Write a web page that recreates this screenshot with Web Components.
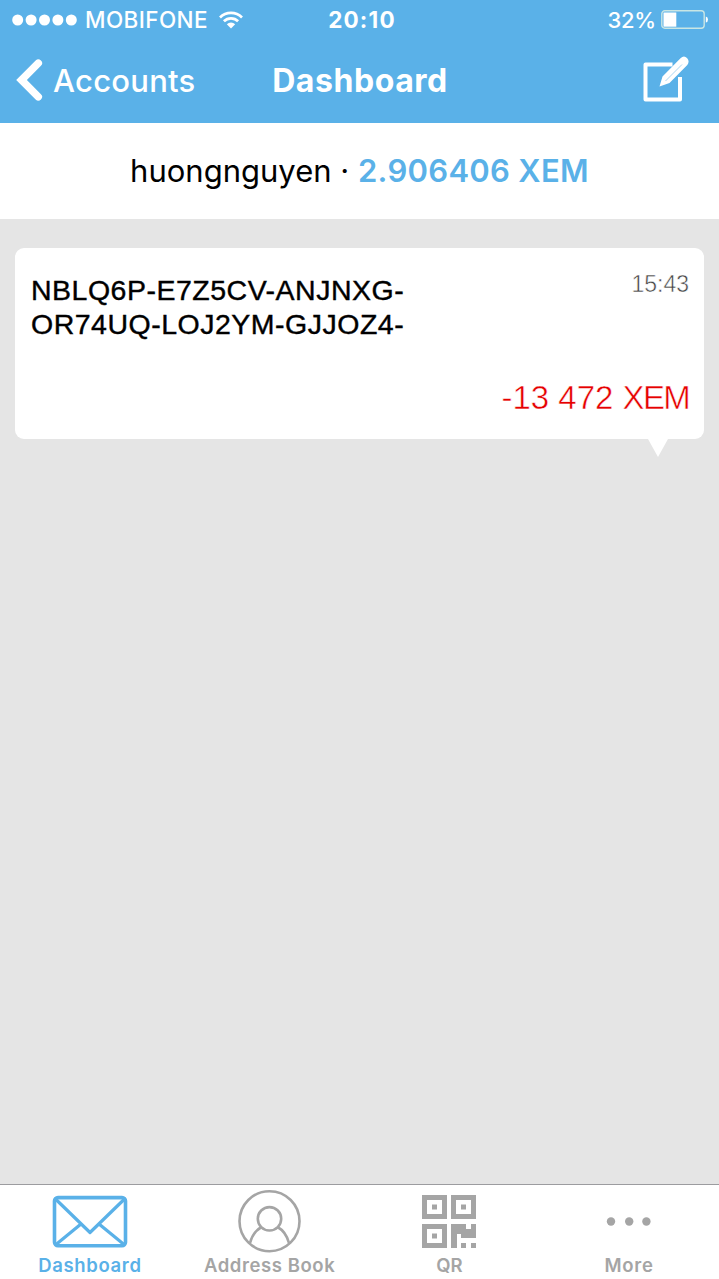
<!DOCTYPE html>
<html lang="en">
<head>
<meta charset="utf-8">
<meta name="viewport" content="width=device-width, initial-scale=1">
<title>Dashboard</title>
<style>
    html, body {
        margin: 0;
        height: 100%;
    }
    body {
        display: flex;
        flex-direction: column;
        overflow: hidden;
        background: #e5e5e5;
        font-family: Inter, "Liberation Sans", sans-serif;
        --accent: #5ab1e8;
        --muted: #a5a5a5;
    }
    main {
        flex: 1;
        padding: 29px 15px 0;
    }
</style>
</head>
<body>
<status-bar carrier="MOBIFONE" time="20:10" battery="32"></status-bar>
<nav-bar back="Accounts">Dashboard</nav-bar>
<account-balance name="huongnguyen">2.906406 XEM</account-balance>
<main>
    <transaction-card time="15:43" amount="-13 472" unit="XEM">NBLQ6P-E7Z5CV-ANJNXG-<br>OR74UQ-LOJ2YM-GJJOZ4-</transaction-card>
</main>
<tab-bar>
    <tab-item active style="--tracking: .65px">
        <svg slot="icon" width="76" height="64" fill="none" stroke="currentColor" stroke-width="3.6" stroke-linejoin="round">
            <rect x="2.5" y="8.6" width="71" height="48.2" rx="3.5"/>
            <path d="M4 10.5 38 43.5 72 10.5M4 55.5 29 35M72 55.5 47 35" stroke-width="3.2"/>
        </svg>
        Dashboard
    </tab-item>
    <tab-item style="--tracking: .58px">
        <svg slot="icon" width="64" height="64" fill="none" stroke="currentColor" stroke-width="2.6">
            <circle cx="31.5" cy="32.2" r="30"/>
            <circle cx="31.5" cy="29.8" r="11.7"/>
            <path d="M23.5 38C18 41 14 46.5 12 54M39.5 38C45 41 49 46.5 51 54"/>
        </svg>
        Address Book
    </tab-item>
    <tab-item style="--tracking: 0px">
        <svg slot="icon" width="54" height="64" fill="currentColor">
            <path fill-rule="evenodd" d="M0 6h25v24H0zM5 11v14h15V11zM29 6h25v24H29zM34 11v14h15V11zM0 35h25v24H0zM5 40v14h15V40z"/>
            <path d="M10 15.5h5v5h-5zM39 15.5h5v5h-5zM10 44.5h5v5h-5z"/>
            <path d="M29 35h15v5h5v-5h5v14H39v-4h-4v14h-6zM39 54h5v5h-5zM49 54h5v5h-5z"/>
        </svg>
        QR
    </tab-item>
    <tab-item style="--tracking: .8px">
        <svg slot="icon" width="48" height="64" fill="currentColor">
            <circle cx="6" cy="32.5" r="4.2"/>
            <circle cx="24.2" cy="32.5" r="4.2"/>
            <circle cx="41.4" cy="32.5" r="4.2"/>
        </svg>
        More
    </tab-item>
</tab-bar>

<script>
class StatusBar extends HTMLElement {
    constructor() {
        super()
        this.attachShadow({mode: "open"})
        this.shadowRoot.innerHTML = `
            <style>
                :host {
                    display: grid;
                    grid-template-columns: 1fr auto 1fr;
                    align-items: center;
                    height: 39px;
                    padding: 0 11px 0 12px;
                    color: #fff;
                    background: var(--accent);
                    font-size: 22.5px;
                    font-weight: 500;
                }
                div {
                    display: flex;
                    align-items: center;
                }
                #carrier {
                    margin: 0 11px 0 8px;
                    letter-spacing: .4px;
                }
                #time {
                    margin-left: 4px;
                    font-weight: 700;
                    letter-spacing: 1.2px;
                }
                .right {
                    justify-content: flex-end;
                    gap: 5px;
                }
                #battery {
                    font-size: 22px;
                    letter-spacing: -.2px;
                }
            </style>
            <div>
                <svg width="65" height="12" fill="#fff">
                    <circle cx="5.7" cy="6" r="5.5"/>
                    <circle cx="19.1" cy="6" r="5.5"/>
                    <circle cx="32.5" cy="6" r="5.5"/>
                    <circle cx="45.9" cy="6" r="5.5"/>
                    <circle cx="59.3" cy="6" r="5.5"/>
                </svg>
                <span id="carrier"></span>
                <svg width="24" height="18" fill="none" stroke="#fff" stroke-width="2.7">
                    <path d="M1 6.5a15.6 15.6 0 0 1 22 0M4.9 10.3a10 10 0 0 1 14.2 0"/>
                    <path d="M7.8 13.3a6 6 0 0 1 8.4 0L12 17.5z" fill="#fff" stroke="none"/>
                </svg>
            </div>
            <span id="time"></span>
            <div class="right">
                <span id="battery"></span>
                <svg width="47" height="19">
                    <rect x=".8" y=".8" width="42.4" height="17.4" rx="3" fill="none" stroke="#c9e6e4" stroke-width="1.4"/>
                    <path id="charge" fill="#fff"/>
                    <path d="M44.8 6.5q2.2.5 2.2 3t-2.2 3z" fill="#fff"/>
                </svg>
            </div>
        `
    }

    connectedCallback() {
        const battery = Number(this.getAttribute("battery"))
        this.shadowRoot.querySelector("#carrier").textContent = this.getAttribute("carrier")
        this.shadowRoot.querySelector("#time").textContent = this.getAttribute("time")
        this.shadowRoot.querySelector("#battery").textContent = battery + "%"
        this.shadowRoot.querySelector("#charge").setAttribute("d", `M2.5 2.5h${battery * .4}v14.2H2.5z`)
    }
}

class NavBar extends HTMLElement {
    constructor() {
        super()
        this.attachShadow({mode: "open"})
        this.shadowRoot.innerHTML = `
            <style>
                :host {
                    display: grid;
                    grid-template-columns: 1fr auto 1fr;
                    align-items: center;
                    height: 84px;
                    padding: 0 29px 2px 16px;
                    box-sizing: border-box;
                    color: #fff;
                    background: var(--accent);
                    font-size: 31px;
                }
                a {
                    display: flex;
                    align-items: center;
                    gap: 10px;
                    font-weight: 500;
                    letter-spacing: .25px;
                }
                h1 {
                    margin: 0 0 0 14px;
                    font-size: 32px;
                    font-weight: 700;
                    letter-spacing: .55px;
                }
                #compose {
                    justify-self: end;
                    margin-bottom: 2px;
                }
            </style>
            <a>
                <svg width="27" height="44" fill="none" stroke="#fff" stroke-width="7.5" stroke-linejoin="miter" stroke-linecap="round">
                    <path d="M22.3 5.2 5.5 22 22.3 38.8"/>
                </svg>
                <span id="back"></span>
            </a>
            <h1><slot></slot></h1>
            <svg id="compose" width="48" height="48">
                <path d="M30.5 9.5H3.5v35H38V22" fill="none" stroke="#fff" stroke-width="4" stroke-linejoin="round"/>
                <path d="M17.5 31.5 20.5 21.5 38.5 3.2Q42-.2 45 3T45.3 10L27.5 28z" fill="#fff"/>
                <path d="M23.5 26 40 9.5" stroke="#a9d5f2" stroke-width="1"/>
            </svg>
        `
    }

    connectedCallback() {
        this.shadowRoot.querySelector("#back").textContent = this.getAttribute("back")
    }
}

class AccountBalance extends HTMLElement {
    constructor() {
        super()
        this.attachShadow({mode: "open"})
        this.shadowRoot.innerHTML = `
            <style>
                :host {
                    display: flex;
                    justify-content: center;
                    align-items: center;
                    height: 96px;
                    padding-bottom: 2px;
                    box-sizing: border-box;
                    background: #fff;
                    color: #000;
                    font-size: 31px;
                    white-space: pre;
                }
                b {
                    color: var(--accent);
                    font-weight: 600;
                    letter-spacing: .3px;
                }
            </style>
            <span id="name"></span><span> · </span><b><slot></slot></b>
        `
    }

    connectedCallback() {
        this.shadowRoot.querySelector("#name").textContent = this.getAttribute("name")
    }
}

class TransactionCard extends HTMLElement {
    constructor() {
        super()
        this.attachShadow({mode: "open"})
        this.shadowRoot.innerHTML = `
            <style>
                :host {
                    display: flex;
                    flex-direction: column;
                    justify-content: space-between;
                    position: relative;
                    height: 191px;
                    padding: 24px 15px 21px 16px;
                    box-sizing: border-box;
                    border-radius: 9px;
                    background: #fff;
                    font-family: "Liberation Sans", Arial, sans-serif;
                }
                /* speech bubble tail */
                :host::after {
                    content: "";
                    position: absolute;
                    top: 100%;
                    right: 36px;
                    width: 20px;
                    height: 18px;
                    background: #fff;
                    clip-path: polygon(0 0, 100% 0, 50% 100%);
                }
                .top {
                    display: flex;
                    justify-content: space-between;
                }
                #address {
                    padding-top: 2px;
                    color: #000;
                    font-size: 28.5px;
                    line-height: 33.7px;
                    letter-spacing: .5px;
                    -webkit-text-stroke: .4px #000;
                }
                #time, .total {
                    -webkit-text-stroke: .5px #fff;
                }
                #time {
                    color: #444;
                    font-size: 23px;
                    line-height: 24px;
                }
                .total {
                    align-self: flex-end;
                    color: #e60000;
                    font-size: 33px;
                    line-height: 40px;
                    white-space: nowrap;
                }
                #unit {
                    letter-spacing: -1.7px;
                }
            </style>
            <div class="top">
                <div id="address"><slot></slot></div>
                <div id="time"></div>
            </div>
            <div class="total"><span id="amount"></span> <span id="unit"></span></div>
        `
    }

    connectedCallback() {
        this.shadowRoot.querySelector("#time").textContent = this.getAttribute("time")
        this.shadowRoot.querySelector("#amount").textContent = this.getAttribute("amount")
        this.shadowRoot.querySelector("#unit").textContent = this.getAttribute("unit")
    }
}

class TabBar extends HTMLElement {
    constructor() {
        super()
        this.attachShadow({mode: "open"})
        this.shadowRoot.innerHTML = `
            <style>
                :host {
                    display: grid;
                    grid-template-columns: repeat(4, 1fr);
                    height: 95px;
                    box-sizing: border-box;
                    border-top: 1px solid #9c9c9f;
                    background: #fff;
                }
            </style>
            <slot></slot>
        `
    }
}

class TabItem extends HTMLElement {
    constructor() {
        super()
        this.attachShadow({mode: "open"})
        this.shadowRoot.innerHTML = `
            <style>
                :host {
                    display: flex;
                    flex-direction: column;
                    align-items: center;
                    padding-top: 4px;
                    color: var(--muted);
                    font-size: 18.5px;
                    font-weight: 600;
                    line-height: 24px;
                    letter-spacing: var(--tracking, .5px);
                }
                :host([active]) {
                    color: var(--accent);
                }
            </style>
            <slot name="icon"></slot>
            <span><slot></slot></span>
        `
    }
}

customElements.define("status-bar", StatusBar)
customElements.define("nav-bar", NavBar)
customElements.define("account-balance", AccountBalance)
customElements.define("transaction-card", TransactionCard)
customElements.define("tab-bar", TabBar)
customElements.define("tab-item", TabItem)
</script>
</body>
</html>
